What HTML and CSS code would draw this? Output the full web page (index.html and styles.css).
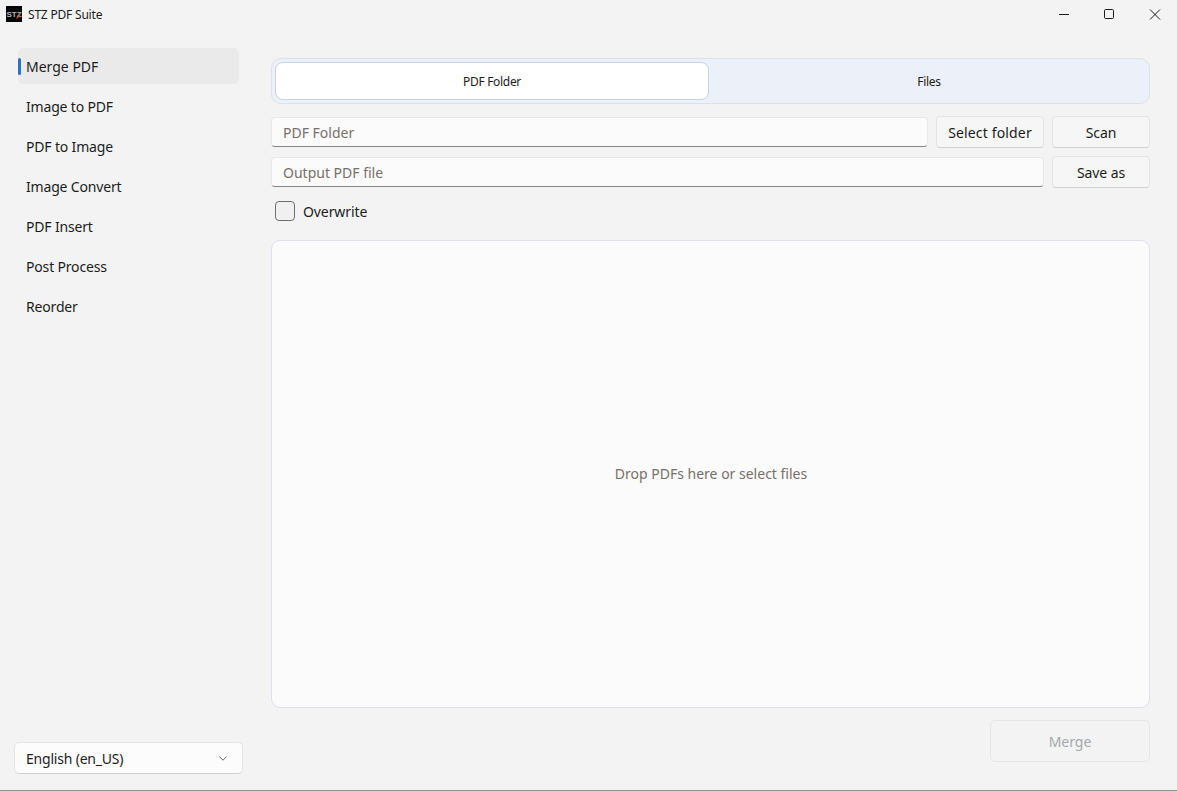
FILE: index.html
```html
<!DOCTYPE html>
<html lang="en">
<head>
<meta charset="utf-8">
<title>STZ PDF Suite</title>
<link rel="stylesheet" href="styles.css">
</head>
<body>
<div class="window">
  <header class="titlebar">
    <div class="app-title">
      <svg class="app-icon" width="16" height="16" viewBox="0 0 16 16"><rect width="16" height="16" fill="#050505"/><text class="logo-text" x="8" y="11">STZ</text><path d="M10.500 12.500l3.500-3.500" stroke="#c8452c" stroke-width="1.300"/></svg>
      <span>STZ PDF Suite</span>
    </div>
    <div class="win-controls">
      <svg class="win-btn" width="46" height="30" viewBox="0 0 46 30"><path d="M20 14.500h10" stroke="#1a1a1a" fill="none"/></svg>
      <svg class="win-btn" width="46" height="30" viewBox="0 0 46 30"><rect x="19.500" y="9.500" width="9" height="9" rx="1.200" stroke="#1a1a1a" fill="none"/></svg>
      <svg class="win-btn" width="46" height="30" viewBox="0 0 46 30"><path d="M19 9.500l10 10M29 9.500l-10 10" stroke="#1a1a1a" fill="none"/></svg>
    </div>
  </header>
  <div class="content">
    <aside class="sidebar">
      <nav class="nav">
        <a class="nav-item active">Merge PDF</a>
        <a class="nav-item">Image to PDF</a>
        <a class="nav-item">PDF to Image</a>
        <a class="nav-item">Image Convert</a>
        <a class="nav-item">PDF Insert</a>
        <a class="nav-item">Post Process</a>
        <a class="nav-item">Reorder</a>
      </nav>
      <div class="combo">
        <span>English (en_US)</span>
        <svg width="8" height="5" viewBox="0 0 8 5"><path d="M0.400 0.500L4 4.200l3.600-3.700" fill="none" stroke="#666" stroke-width="1"/></svg>
      </div>
    </aside>
    <main class="main">
      <div class="segmented">
        <div class="segment selected">PDF Folder</div>
        <div class="segment">Files</div>
      </div>
      <div class="row row-first">
        <div class="input">PDF Folder</div>
        <button class="btn btn-select">Select folder</button>
        <button class="btn btn-side">Scan</button>
      </div>
      <div class="row">
        <div class="input">Output PDF file</div>
        <button class="btn btn-side">Save as</button>
      </div>
      <label class="check"><span class="box"></span><span class="check-label">Overwrite</span></label>
      <div class="drop">Drop PDFs here or select files</div>
      <div class="footer"><button class="btn-primary">Merge</button></div>
    </main>
  </div>
</div>
</body>
</html>
```
FILE: styles.css
```css
* { box-sizing: border-box; }
html, body { margin: 0; height: 100%; }
body {
  background: #f3f3f3;
  font-family: "Noto Sans", "Open Sans", "Liberation Sans", sans-serif;
  font-size: 14px;
  color: #1f1f1f;
  overflow: hidden;
}
.window {
  height: 791px;
  display: flex;
  flex-direction: column;
  border-bottom: 1px solid #8f8f8f;
}
.titlebar {
  height: 30px;
  display: flex;
  align-items: center;
  justify-content: space-between;
  flex: none;
}
.app-title {
  display: flex;
  align-items: center;
  gap: 6px;
  padding: 0 0 2px 6px;
  font-size: 12px;
  letter-spacing: -0.2px;
  color: #1c1c1c;
}
.app-icon { display: block; }
.logo-text {
  font-family: "Liberation Sans", sans-serif;
  font-size: 8px;
  font-weight: 700;
  letter-spacing: 0;
  text-anchor: middle;
  fill: #b4b4b4;
}
.win-controls { display: flex; }
.win-btn { display: block; }
.content { flex: 1; display: flex; min-height: 0; }
.sidebar {
  width: 257px;
  flex: none;
  display: flex;
  flex-direction: column;
  padding: 18px 14px 16px;
}
.nav { display: flex; flex-direction: column; gap: 4px; padding: 0 4px; }
.nav-item {
  height: 36px;
  display: flex;
  align-items: center;
  padding-left: 8px;
  border-radius: 5px;
  position: relative;
  color: #1c1c1c;
  letter-spacing: -0.17px;
}
.nav-item.active { background: #eaeaea; letter-spacing: 0; }
.nav-item.active::before {
  content: "";
  position: absolute;
  left: 0;
  top: 10px;
  width: 3px;
  height: 17px;
  border-radius: 2px;
  background: #2f72c4;
}
.combo {
  margin-top: auto;
  height: 32px;
  background: #fcfcfc;
  border: 1px solid #e4e4e4;
  border-bottom-color: #cfcfcf;
  border-radius: 5px;
  padding: 0 15px 0 11px;
  display: flex;
  align-items: center;
  justify-content: space-between;
  color: #1c1c1c;
  letter-spacing: -0.2px;
}
.main {
  flex: 1;
  min-width: 0;
  display: flex;
  flex-direction: column;
  padding: 28px 27px 28px 14px;
}
.segmented {
  height: 46px;
  display: flex;
  gap: 3px;
  padding: 3px;
  background: #ecf0f8;
  border: 1px solid #dbe0ea;
  border-radius: 10px;
  font-size: 12px;
  letter-spacing: -0.3px;
  color: #1c1c1c;
}
.segment {
  flex: 1;
  display: flex;
  align-items: center;
  justify-content: center;
  border-radius: 8px;
  border: 1px solid transparent;
}
.segment.selected { background: #fff; border-color: #c9d3e8; }
.row { display: flex; gap: 8px; height: 30px; margin-top: 10px; }
.row-first { margin-top: 13px; }
.input {
  flex: 1;
  min-width: 0;
  display: flex;
  align-items: center;
  padding-left: 11px;
  background: #fbfbfb;
  border: 1px solid #e8e8e8;
  border-bottom: 1px solid #868686;
  border-radius: 4px;
  color: #77706a;
}
.btn {
  font: inherit;
  color: #1c1c1c;
  background: #f6f6f6;
  border: 1px solid #e4e4e4;
  border-bottom-color: #d2d2d2;
  border-radius: 4px;
  padding: 0;
  margin-top: -1px;
  height: 32px;
}
.btn-select { width: 108px; letter-spacing: 0.15px; }
.btn-side { width: 98px; letter-spacing: -0.1px; }
.check {
  display: flex;
  align-items: center;
  gap: 8px;
  margin: 14px 0 0 4px;
  height: 20px;
  color: #1c1c1c;
}
.check-label { letter-spacing: -0.1px; }
.box {
  width: 20px;
  height: 20px;
  background: #f0f0f0;
  border: 1px solid #6e6e6e;
  border-radius: 4px;
}
.drop {
  flex: 1;
  min-height: 0;
  margin-top: 19px;
  padding: 0 0 1px 1px;
  display: flex;
  align-items: center;
  justify-content: center;
  background: #fbfbfb;
  border: 1px solid #dde1ea;
  border-radius: 9px;
  color: #77706a;
}
.footer { display: flex; justify-content: flex-end; margin-top: 12px; }
.btn-primary {
  width: 160px;
  height: 42px;
  font: inherit;
  color: #a3a8ab;
  background: #f3f3f3;
  border: 1px solid #e6e6e6;
  border-radius: 5px;
}
```
